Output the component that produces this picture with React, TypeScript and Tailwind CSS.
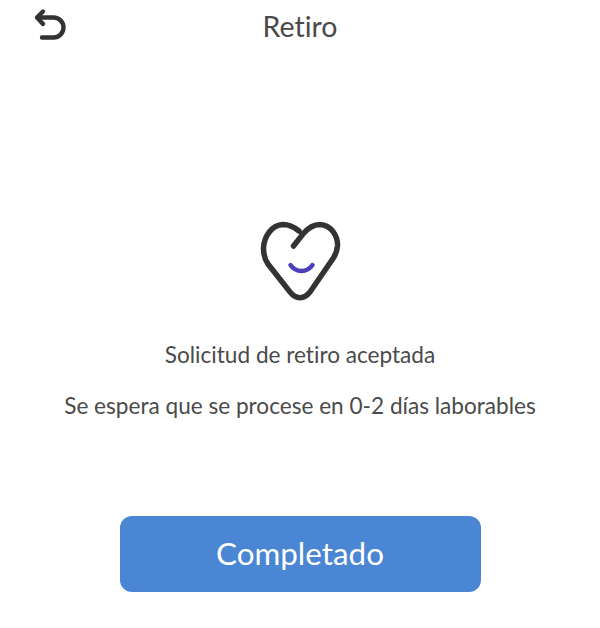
export default function App() {
  return (
    <div className="flex h-[628px] w-[600px] flex-col items-center bg-white font-['Lato','Noto_Sans',sans-serif] text-[#4a4a4a] [font-variant-ligatures:none]">
      <header className="grid h-[54px] w-full grid-cols-[1fr_auto_1fr] items-center">
        <div className="pl-[30px] -mt-[4px]">
          <svg width="40" height="40" viewBox="30 3 40 40" fill="none" stroke="#333333" strokeWidth="4.4" strokeLinecap="round" strokeLinejoin="round">
            <path d="M43 9.5 L37 15.5 L43 22" />
            <path d="M38 15.5 H53.5 A10 10 0 0 1 53.5 35.5 H42" />
          </svg>
        </div>
        <h1 className="-mt-[2px] text-[28.5px] leading-none">Retiro</h1>
        <div />
      </header>
      <svg className="mt-[163px]" width="90" height="90" viewBox="255 217 90 90" fill="none" strokeLinecap="round" strokeLinejoin="round">
        <path
          d="M293.5 246 L303 234 C308 228 314 224.5 320 224.5 C331 225 338 236 337.5 246 C337 252 335 256 332 260 L310 292 C304 299.5 296 299.5 290 292 L268 264 C265 260 263.5 254 263.5 248 C264 236 272 225 283 224.5 C289 224.5 294 227 299 231"
          stroke="#333333"
          strokeWidth="5.5"
        />
        <path d="M290.5 265 C296 273 307 273 312.5 265" stroke="#4c3fb8" strokeWidth="4.5" />
      </svg>
      <p className="mt-[34px] text-[22.6px] leading-[28px]">Solicitud de retiro aceptada</p>
      <p className="mt-[23px] text-[22.6px] leading-[28px]">Se espera que se procese en 0-2 días laborables</p>
      <button className="mt-[96px] h-[76px] w-[361px] rounded-[12px] bg-[#4a86d4] text-[31.4px] text-white">Completado</button>
    </div>
  );
}
